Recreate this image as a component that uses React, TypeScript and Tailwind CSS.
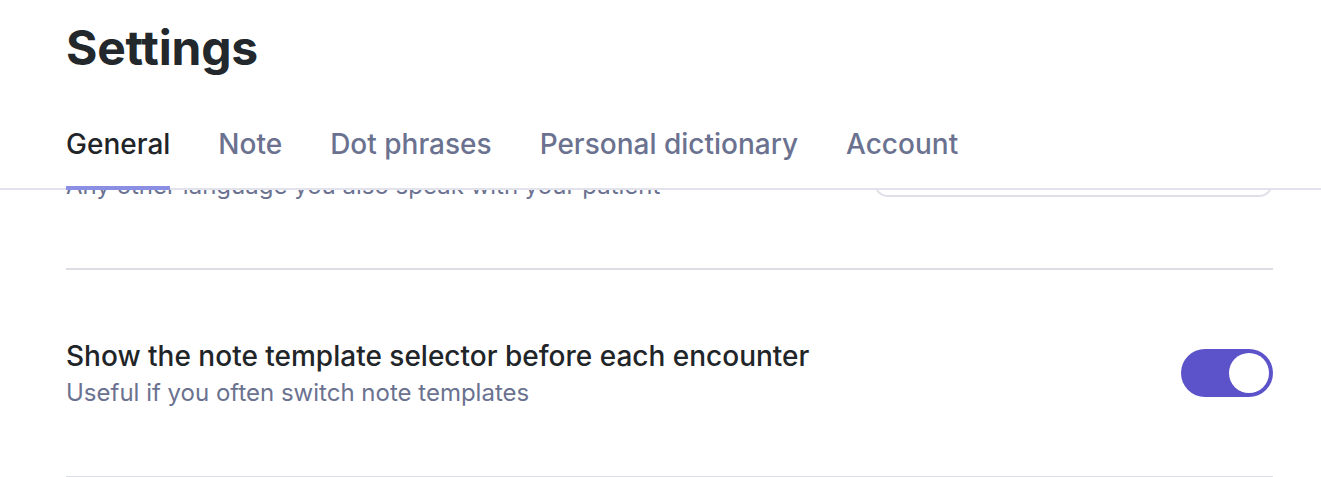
import { useState } from "react"

const tabs = ["General", "Note", "Dot phrases", "Personal dictionary", "Account"]

function Toggle({ on, onChange }: { on: boolean; onChange: (v: boolean) => void }) {
  return (
    <button
      onClick={() => onChange(!on)}
      className={`flex items-center w-[92px] h-[48px] rounded-full p-[4px] shrink-0 ${
        on ? "bg-[#5c52c9] justify-end" : "bg-[#d9dbe3] justify-start"
      }`}
    >
      <span className="block w-[40px] h-[40px] rounded-full bg-white" />
    </button>
  )
}

export default function App() {
  const [active, setActive] = useState("General")
  const [showSelector, setShowSelector] = useState(true)

  return (
    <div className="h-[477px] w-full flex flex-col bg-white overflow-hidden font-['Inter',sans-serif]">
      <header className="bg-white border-b-2 border-[#e1e2eb] pl-[66px] pr-[48px] shrink-0 relative z-10">
        <h1 className="pt-[24px] text-[48px] leading-[48px] font-bold text-[#22282c] tracking-[-0.2px]">Settings</h1>
        <nav className="flex gap-[48px] mt-[56px]">
          {tabs.map((t) => (
            <button
              key={t}
              onClick={() => setActive(t)}
              className={`pb-[25px] -mb-[2px] border-b-4 text-[28px] leading-[33px] font-medium ${
                active === t ? "border-[#8a8fe3] text-[#1f2529]" : "border-transparent text-[#6b7290]"
              }`}
            >
              {t}
            </button>
          ))}
        </nav>
      </header>

      <div className="flex-1 overflow-hidden pl-[66px] pr-[48px]">
        <div className="-mt-[127px]">
          <div className="h-[207px] flex items-center justify-between border-b-2 border-[#dcdde5]">
            <div>
              <div className="text-[28px] leading-[40px] font-medium text-[#1f2528]">Other languages</div>
              <div className="text-[24px] leading-[34px] text-[#6b7290]">
                Any other language you also speak with your patient
              </div>
            </div>
            <div className="w-[399px] h-[62px] rounded-[14px] border-2 border-[#dfe0e9] flex items-center px-[20px] text-[24px] text-[#6b7290]">
              None
            </div>
          </div>

          <div className="h-[208px] flex items-center justify-between border-b-2 border-[#dcdde5]">
            <div>
              <div className="text-[28px] leading-[40px] font-medium text-[#1f2528]">
                Show the note template selector before each encounter
              </div>
              <div className="text-[24px] leading-[34px] text-[#6b7290]">Useful if you often switch note templates</div>
            </div>
            <Toggle on={showSelector} onChange={setShowSelector} />
          </div>
        </div>
      </div>
    </div>
  )
}
